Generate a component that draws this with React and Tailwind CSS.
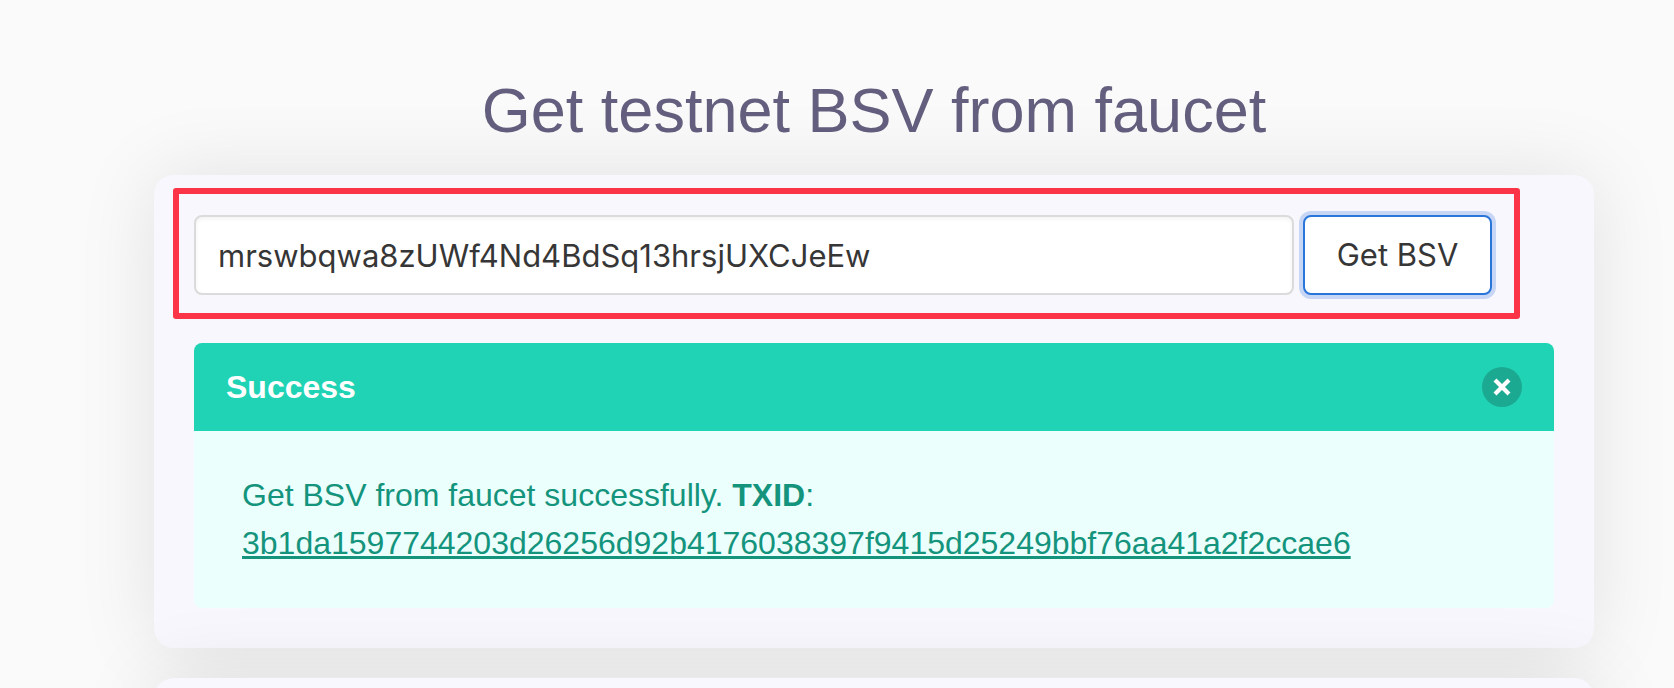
import { useState } from "react";

const TXID = "3b1da1597744203d26256d92b4176038397f9415d25249bbf76aa41a2f2ccae6";

const cardClass =
  "rounded-[20px] bg-[#f8f7fd] px-10 shadow-[0_0_80px_rgba(0,0,0,0.1)]";

function FaucetForm() {
  const [address, setAddress] = useState("mrswbqwa8zUWf4Nd4BdSq13hrsjUXCJeEw");
  return (
    <form
      className="relative flex gap-[9px] pr-[62px] font-['Inter',sans-serif] text-[31px] text-[#363636]"
      onSubmit={(e) => e.preventDefault()}
    >
      <input
        type="text"
        aria-label="Testnet address"
        value={address}
        onChange={(e) => setAddress(e.target.value)}
        className="h-20 min-w-0 flex-1 rounded-lg border-2 border-[#dbdbdb] bg-white px-[22px] shadow-[inset_0_2px_4px_rgba(10,10,10,0.05)] outline-none"
      />
      <button
        type="submit"
        className="h-20 w-[189px] shrink-0 rounded-lg border-2 border-[#2a75d9] bg-white whitespace-nowrap shadow-[0_0_0_4px_rgba(50,115,220,0.25)]"
      >
        Get BSV
      </button>
      <div className="pointer-events-none absolute -top-[27px] right-[34px] -bottom-6 -left-[21px] rounded-[3px] border-6 border-[#fb3447]" />
    </form>
  );
}

function SuccessMessage() {
  const [open, setOpen] = useState(true);
  if (!open) return null;
  return (
    <article className="mt-12 overflow-hidden rounded-lg text-[32px] leading-[48px]">
      <header className="flex h-22 items-center justify-between bg-[#20d3b5] px-8 font-bold text-white">
        <p>Success</p>
        <button
          type="button"
          aria-label="Close"
          onClick={() => setOpen(false)}
          className="flex size-10 items-center justify-center rounded-full bg-[#1ca992]"
        >
          <svg viewBox="0 0 20 20" className="size-5" aria-hidden="true">
            <path
              d="M3 3 L17 17 M17 3 L3 17"
              stroke="#fff"
              strokeWidth="4.2"
            />
          </svg>
        </button>
      </header>
      <div className="bg-[#ebfffc] px-12 pt-10 pb-[41px] text-[#14947d]">
        <p>
          Get BSV from faucet successfully. <strong>TXID</strong>:
        </p>
        <a
          href="#tx"
          className="block w-fit break-all underline decoration-[3px] underline-offset-2 [text-decoration-skip-ink:none]"
        >
          {TXID}
        </a>
      </div>
    </article>
  );
}

export default function App() {
  return (
    <main className="h-screen overflow-hidden bg-[#fafafa] pt-[65px] pr-20 pl-[154px] font-['Liberation_Sans',Arial,sans-serif]">
      <h1 className="mb-5 text-center text-[63px] leading-[90px] text-[#645f7e]">
        Get testnet BSV from faucet
      </h1>
      <div className="flex flex-col gap-[30px]">
        <section className={`${cardClass} py-10`}>
          <FaucetForm />
          <SuccessMessage />
        </section>
        <section className={`${cardClass} h-60`} />
      </div>
    </main>
  );
}
